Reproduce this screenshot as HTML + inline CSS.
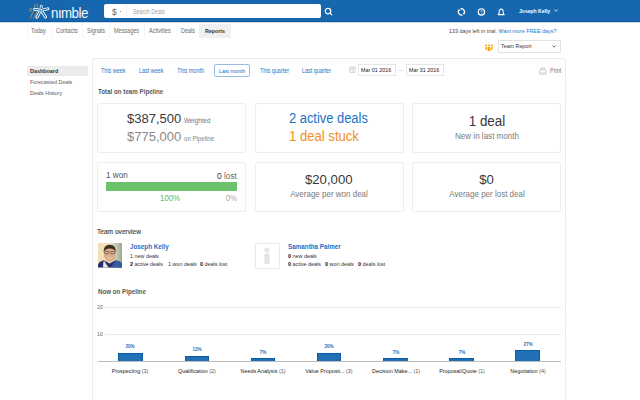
<!DOCTYPE html>
<html><head><meta charset="utf-8"><style>
html,body{margin:0;padding:0;}
body{width:640px;height:400px;overflow:hidden;position:relative;background:#fff;font-family:"Liberation Sans",sans-serif;}
.t{position:absolute;white-space:nowrap;}
</style></head><body>
<div style="position:absolute;left:0px;top:0px;width:640px;height:21px;background:#1767af;"></div>
<div style="position:absolute;left:0px;top:21px;width:640px;height:1px;background:#0d58a0;"></div>
<div style="position:absolute;left:0px;top:22px;width:640px;height:1px;background:#d3dbe6;"></div>
<svg style="position:absolute;left:28px;top:2px" width="22" height="18" viewBox="0 0 22 18">
<g fill="none" stroke="#d6a444" stroke-width="0.75" stroke-linecap="round">
<path d="M7.2 2.2 Q6 3.2 6.6 4.9"/>
<path d="M10 2.2 Q8.8 3.2 9.4 4.9"/>
<path d="M3.6 6.5 Q1.6 6.2 1.3 7.6 Q1.2 8.9 3.4 9.1"/>
<path d="M5.2 9.6 Q4.4 10.8 4.2 12 Q3.2 13.2 3.4 14.2 Q2.4 15 2.2 15.8"/>
<path d="M8.8 9.9 Q8 11 7.8 12.2 Q6.8 13.4 7 14.4 Q6 15.2 5.6 15.9"/>
</g>
<g stroke-linecap="round" fill="none">
<path d="M6.6 7.2 L12.6 8.3 M14 8.1 L19.8 6.8 M12.2 9.4 L8.9 15.2 M14 9.6 L17.6 15.1" stroke="#fff" stroke-width="2.9"/>
<path d="M6.6 7.2 L12.6 8.3 M14 8.1 L19.8 6.8 M12.2 9.4 L8.9 15.2 M14 9.6 L17.6 15.1" stroke="#1767af" stroke-width="1.1"/>
</g>
<path d="M12.3 5.9 V4.3 Q12.3 3.2 13.3 3.2 Q14.3 3.2 14.3 4.3 V5.9" fill="none" stroke="#fff" stroke-width="0.9"/>
</svg>
<div class="t" style="left:50.60px;top:5.95px;font-size:14.23px;line-height:14.23px;color:#f4f7fb;font-weight:normal;transform:scaleX(0.9346);transform-origin:0 0;letter-spacing:-0.55px;">n&#305;mble</div>
<div style="position:absolute;left:104px;top:4px;width:216.5px;height:14px;background:#fff;border-radius:2px;"></div>
<div class="t" style="left:111.80px;top:7.01px;font-size:9.49px;line-height:9.49px;color:#666;font-weight:normal;transform:scaleX(0.8850);transform-origin:0 0;">$</div>
<div style="position:absolute;left:120.2px;top:11.2px;width:1.2000000000000028px;height:1.0px;background:#888;"></div>
<div style="position:absolute;left:126px;top:4px;width:1px;height:14px;background:#f0f0f0;"></div>
<div class="t" style="left:132.80px;top:8.67px;font-size:6.89px;line-height:6.89px;color:#a0a0a0;font-weight:normal;transform:scaleX(0.7692);transform-origin:0 0;">Search Deals</div>
<svg style="position:absolute;left:324px;top:6.5px" width="10" height="9" viewBox="0 0 10 9">
<circle cx="4" cy="4.1" r="2.75" fill="none" stroke="#fff" stroke-width="1.15"/>
<path d="M6 6.1 L7.8 7.9" stroke="#fff" stroke-width="1.2" stroke-linecap="round"/></svg>
<svg style="position:absolute;left:457px;top:7.5px" width="9" height="8" viewBox="0 0 9 8">
<path d="M3.34 0.99 A3.1 3.1 0 0 1 6.77 5.89" fill="none" stroke="#fff" stroke-width="1.3"/>
<path d="M5.46 6.81 A3.1 3.1 0 0 1 2.03 1.91" fill="none" stroke="#fff" stroke-width="1.3"/>
<path d="M7.9 4.6 L6.9 6.6 L5.4 5.2 Z" fill="#fff"/><path d="M0.9 3.2 L1.9 1.2 L3.4 2.6 Z" fill="#fff"/></svg>
<svg style="position:absolute;left:476.5px;top:7.5px" width="9" height="8" viewBox="0 0 9 8">
<circle cx="4.4" cy="3.9" r="3.15" fill="none" stroke="#fff" stroke-width="1.2"/>
<path d="M3.5 2.9 q0.9-1.1 1.8 0 q0.3 0.7-0.8 1.3" fill="none" stroke="#fff" stroke-width="0.75"/>
<circle cx="4.5" cy="5.3" r="0.4" fill="#fff"/></svg>
<svg style="position:absolute;left:496.5px;top:7.5px" width="9" height="8" viewBox="0 0 9 8">
<path d="M1.2 6.6 Q2.3 5.8 2.3 3.6 Q2.3 0.9 4.2 0.9 Q6.1 0.9 6.1 3.6 Q6.1 5.8 7.2 6.6 Z" fill="none" stroke="#fff" stroke-width="1.05" stroke-linejoin="round"/>
</svg>
<div class="t" style="left:518.90px;top:9.08px;font-size:5.81px;line-height:5.81px;color:#fff;font-weight:bold;transform:scaleX(0.8696);transform-origin:0 0;">Joseph Kelly</div>
<svg style="position:absolute;left:553.5px;top:9.2px" width="5" height="3" viewBox="0 0 5 3">
<path d="M0.5 0.5 L2.2 2.3 L3.9 0.5" fill="none" stroke="#fff" stroke-width="0.8"/></svg>
<div style="position:absolute;left:27px;top:24px;width:1px;height:14px;background:#f5f5f5;"></div>
<div style="position:absolute;left:51px;top:24px;width:1px;height:14px;background:#f5f5f5;"></div>
<div style="position:absolute;left:82px;top:24px;width:1px;height:14px;background:#f5f5f5;"></div>
<div style="position:absolute;left:109px;top:24px;width:1px;height:14px;background:#f5f5f5;"></div>
<div style="position:absolute;left:144px;top:24px;width:1px;height:14px;background:#f5f5f5;"></div>
<div class="t" style="left:31.25px;top:27.84px;font-size:6.32px;line-height:6.32px;color:#6b6b6b;font-weight:normal;transform:scaleX(0.8696);transform-origin:0 0;">Today</div>
<div class="t" style="left:55.90px;top:27.84px;font-size:6.32px;line-height:6.32px;color:#6b6b6b;font-weight:normal;transform:scaleX(0.8696);transform-origin:0 0;">Contacts</div>
<div class="t" style="left:86.80px;top:27.84px;font-size:6.32px;line-height:6.32px;color:#6b6b6b;font-weight:normal;transform:scaleX(0.8696);transform-origin:0 0;">Signals</div>
<div class="t" style="left:114.00px;top:27.84px;font-size:6.32px;line-height:6.32px;color:#6b6b6b;font-weight:normal;transform:scaleX(0.8696);transform-origin:0 0;">Messages</div>
<div class="t" style="left:149.10px;top:27.84px;font-size:6.32px;line-height:6.32px;color:#6b6b6b;font-weight:normal;transform:scaleX(0.8696);transform-origin:0 0;">Activities</div>
<div class="t" style="left:181.00px;top:27.84px;font-size:6.32px;line-height:6.32px;color:#6b6b6b;font-weight:normal;transform:scaleX(0.8696);transform-origin:0 0;">Deals</div>
<div style="position:absolute;left:199px;top:24px;width:32px;height:14px;background:#f0f0f0;"></div>
<div class="t" style="left:204.75px;top:28.04px;font-size:6.09px;line-height:6.09px;color:#333;font-weight:bold;transform:scaleX(0.8696);transform-origin:0 0;">Reports</div>
<div class="t" style="left:449.10px;top:27.64px;font-size:6.21px;line-height:6.21px;color:#444;font-weight:normal;transform:scaleX(0.8696);transform-origin:0 0;">133 days left in trial. <span style="color:#1c76ca">Want more FREE days?</span></div>
<svg style="position:absolute;left:482px;top:41px" width="14" height="12" viewBox="0 0 14 12">
<g fill="#f8a500"><ellipse cx="4" cy="4.4" rx="1.05" ry="0.85"/><ellipse cx="7" cy="4.4" rx="1.05" ry="0.85"/><ellipse cx="10" cy="4.4" rx="1.05" ry="0.85"/>
<rect x="3.3" y="6" width="1.4" height="3.1" rx="0.6"/><rect x="5.5" y="6.1" width="3" height="3.9" rx="0.4"/><rect x="9.3" y="6" width="1.4" height="3.1" rx="0.6"/></g></svg>
<div style="position:absolute;left:498px;top:40px;width:63px;height:13px;box-sizing:border-box;border:1px solid #e3e3e3;background:#fff;"></div>
<div class="t" style="left:501.10px;top:42.79px;font-size:6.15px;line-height:6.15px;color:#333;font-weight:normal;transform:scaleX(0.8696);transform-origin:0 0;">Team Report</div>
<svg style="position:absolute;left:552px;top:45px" width="5" height="3" viewBox="0 0 5 3">
<path d="M0.5 0.5 L2 2.2 L3.5 0.5" fill="none" stroke="#444" stroke-width="0.8"/></svg>
<div style="position:absolute;left:26.5px;top:65.7px;width:61.7px;height:10.200000000000003px;background:#ececec;"></div>
<div class="t" style="left:29.75px;top:68.24px;font-size:6.21px;line-height:6.21px;color:#333;font-weight:bold;transform:scaleX(0.8696);transform-origin:0 0;">Dashboard</div>
<div class="t" style="left:29.75px;top:78.94px;font-size:6.21px;line-height:6.21px;color:#5a5a5a;font-weight:normal;transform:scaleX(0.8696);transform-origin:0 0;">Forecasted Deals</div>
<div class="t" style="left:29.75px;top:89.64px;font-size:6.21px;line-height:6.21px;color:#5a5a5a;font-weight:normal;transform:scaleX(0.8696);transform-origin:0 0;">Deals History</div>
<div style="position:absolute;left:92px;top:58px;width:474px;height:352px;box-sizing:border-box;border:1px solid #ececec;border-radius:3px;"></div>
<div class="t" style="left:100.75px;top:68.19px;font-size:6.27px;line-height:6.27px;color:#1c76ca;font-weight:normal;transform:scaleX(0.8696);transform-origin:0 0;">This week</div>
<div class="t" style="left:138.75px;top:68.19px;font-size:6.27px;line-height:6.27px;color:#1c76ca;font-weight:normal;transform:scaleX(0.8696);transform-origin:0 0;">Last week</div>
<div class="t" style="left:177.00px;top:68.19px;font-size:6.27px;line-height:6.27px;color:#1c76ca;font-weight:normal;transform:scaleX(0.8696);transform-origin:0 0;">This month</div>
<div class="t" style="left:259.50px;top:68.19px;font-size:6.27px;line-height:6.27px;color:#1c76ca;font-weight:normal;transform:scaleX(0.8696);transform-origin:0 0;">This quarter</div>
<div class="t" style="left:302.00px;top:68.19px;font-size:6.27px;line-height:6.27px;color:#1c76ca;font-weight:normal;transform:scaleX(0.8696);transform-origin:0 0;">Last quarter</div>
<div style="position:absolute;left:214.25px;top:64.25px;width:35.5px;height:12.5px;box-sizing:border-box;border:1px solid #94bde8;border-radius:2px;"></div>
<div class="t" style="left:218.75px;top:68.34px;font-size:6.09px;line-height:6.09px;color:#1b6cc0;font-weight:normal;transform:scaleX(0.8696);transform-origin:0 0;">Last month</div>
<svg style="position:absolute;left:348.5px;top:66px" width="7" height="7" viewBox="0 0 7 7">
<rect x="0.6" y="1.1" width="5.6" height="5.3" fill="#f4f4f4" stroke="#d4d4d4" stroke-width="0.8"/>
<path d="M0.6 2.8 H6.2 M3.4 2.8 V6.4" stroke="#d4d4d4" stroke-width="0.7"/><path d="M2 0.2 V1.6 M4.8 0.2 V1.6" stroke="#d0d0d0" stroke-width="0.8"/></svg>
<div style="position:absolute;left:358px;top:64px;width:38px;height:12px;box-sizing:border-box;border:1px solid #e6e6e6;"></div>
<div class="t" style="left:360.60px;top:67.04px;font-size:6.21px;line-height:6.21px;color:#222;font-weight:normal;transform:scaleX(0.8696);transform-origin:0 0;">Mar 01 2016</div>
<div style="position:absolute;left:399px;top:70px;width:4px;height:1px;background:#e2e2e2;"></div>
<div style="position:absolute;left:406px;top:64px;width:38px;height:12px;box-sizing:border-box;border:1px solid #e6e6e6;"></div>
<div class="t" style="left:408.90px;top:67.04px;font-size:6.21px;line-height:6.21px;color:#222;font-weight:normal;transform:scaleX(0.8696);transform-origin:0 0;">Mar 31 2016</div>
<svg style="position:absolute;left:539px;top:66.5px" width="8" height="8" viewBox="0 0 8 8">
<path d="M1.9 2.2 V0.9 H5.9 V2.2" fill="none" stroke="#bdbdbd" stroke-width="0.75"/>
<path d="M0.7 7 V4.3 Q0.7 2.6 2.1 2.6 H5.7 Q7.1 2.6 7.1 4.3 V7 Z" fill="none" stroke="#b8b8b8" stroke-width="0.75"/>
<path d="M1.8 5.3 H6" stroke="#d0d0d0" stroke-width="0.6"/></svg>
<div class="t" style="left:549.75px;top:67.89px;font-size:6.27px;line-height:6.27px;color:#777;font-weight:normal;transform:scaleX(0.8696);transform-origin:0 0;">Print</div>
<div class="t" style="left:97.50px;top:88.86px;font-size:7.13px;line-height:7.13px;color:#5a5a5a;font-weight:bold;transform:scaleX(0.8696);transform-origin:0 0;">Total on team Pipeline</div>
<div style="position:absolute;left:97px;top:103px;width:149px;height:50px;box-sizing:border-box;border:1px solid #eeeeee;border-radius:2px;background:#fff;"></div>
<div style="position:absolute;left:97px;top:162px;width:149px;height:50px;box-sizing:border-box;border:1px solid #eeeeee;border-radius:2px;background:#fff;"></div>
<div style="position:absolute;left:255px;top:103px;width:149px;height:50px;box-sizing:border-box;border:1px solid #eeeeee;border-radius:2px;background:#fff;"></div>
<div style="position:absolute;left:255px;top:162px;width:149px;height:50px;box-sizing:border-box;border:1px solid #eeeeee;border-radius:2px;background:#fff;"></div>
<div style="position:absolute;left:412px;top:103px;width:149px;height:50px;box-sizing:border-box;border:1px solid #eeeeee;border-radius:2px;background:#fff;"></div>
<div style="position:absolute;left:412px;top:162px;width:149px;height:50px;box-sizing:border-box;border:1px solid #eeeeee;border-radius:2px;background:#fff;"></div>
<div class="t" style="left:127.20px;top:111.67px;font-size:13.26px;line-height:13.26px;color:#3a3a3a;font-weight:normal;transform:scaleX(0.9804);transform-origin:0 0;">$387,500</div>
<div class="t" style="left:183.90px;top:117.37px;font-size:7.24px;line-height:7.24px;color:#777;font-weight:normal;transform:scaleX(0.8696);transform-origin:0 0;">Weighted</div>
<div class="t" style="left:127.20px;top:129.97px;font-size:13.26px;line-height:13.26px;color:#8a8a8a;font-weight:normal;transform:scaleX(0.9804);transform-origin:0 0;">$775,000</div>
<div class="t" style="left:184.40px;top:135.26px;font-size:7.01px;line-height:7.01px;color:#888;font-weight:normal;transform:scaleX(0.8696);transform-origin:0 0;">on Pipeline</div>
<div class="t" style="left:289.30px;top:112.11px;font-size:13.80px;line-height:13.80px;color:#1b72c6;font-weight:normal;transform:scaleX(0.9346);transform-origin:0 0;">2 active deals</div>
<div class="t" style="left:289.30px;top:129.43px;font-size:14.02px;line-height:14.02px;color:#ef8e1f;font-weight:normal;transform:scaleX(0.9346);transform-origin:0 0;">1 deal stuck</div>
<div class="t" style="left:186.50px;width:600px;text-align:center;top:114.70px;font-size:13.94px;line-height:13.94px;color:#383838;font-weight:normal;transform:scaleX(0.9615);transform-origin:50% 0;">1 deal</div>
<div class="t" style="left:186.80px;width:600px;text-align:center;top:132.16px;font-size:9.26px;line-height:9.26px;color:#7a7a7a;font-weight:normal;transform:scaleX(0.8696);transform-origin:50% 0;">New in last month</div>
<div class="t" style="left:106.00px;top:171.66px;font-size:8.20px;line-height:8.20px;color:#555;font-weight:normal;">1 won</div>
<div class="t" style="left:-363.10px;width:600px;text-align:right;top:171.57px;font-size:8.30px;line-height:8.30px;color:#666;font-weight:normal;"><span style="color:#333">0</span> lost</div>
<div style="position:absolute;left:106.3px;top:182.4px;width:130.7px;height:9.0px;background:#6cc16b;"></div>
<div class="t" style="left:-420.30px;width:600px;text-align:right;top:194.07px;font-size:9.36px;line-height:9.36px;color:#5cb85c;font-weight:normal;transform:scaleX(0.8333);transform-origin:100% 0;">100%</div>
<div class="t" style="left:-363.10px;width:600px;text-align:right;top:194.07px;font-size:9.36px;line-height:9.36px;color:#aaa;font-weight:normal;transform:scaleX(0.8333);transform-origin:100% 0;">0%</div>
<div class="t" style="left:28.80px;width:600px;text-align:center;top:173.02px;font-size:13.20px;line-height:13.20px;color:#383838;font-weight:normal;">$20,000</div>
<div class="t" style="left:29.20px;width:600px;text-align:center;top:189.61px;font-size:8.96px;line-height:8.96px;color:#7a7a7a;font-weight:normal;transform:scaleX(0.8929);transform-origin:50% 0;">Average per won deal</div>
<div class="t" style="left:186.50px;width:600px;text-align:center;top:173.42px;font-size:13.20px;line-height:13.20px;color:#383838;font-weight:normal;">$0</div>
<div class="t" style="left:186.70px;width:600px;text-align:center;top:189.61px;font-size:8.96px;line-height:8.96px;color:#7a7a7a;font-weight:normal;transform:scaleX(0.8929);transform-origin:50% 0;">Average per lost deal</div>
<div class="t" style="left:97.00px;top:227.57px;font-size:7.59px;line-height:7.59px;color:#444;font-weight:normal;transform:scaleX(0.8696);transform-origin:0 0;-webkit-text-stroke:0.15px #444;">Team overview</div>
<svg style="position:absolute;left:97.5px;top:243.4px" width="24.5" height="24.6" viewBox="0 0 24.5 24.6">
<defs><linearGradient id="bg" x1="0" y1="0" x2="1" y2="0"><stop offset="0" stop-color="#f5dfae"/><stop offset="0.45" stop-color="#efe2c0"/><stop offset="0.7" stop-color="#cdd2b8"/><stop offset="1" stop-color="#9aa38c"/></linearGradient></defs>
<rect width="24.5" height="24.6" rx="0.8" fill="url(#bg)"/>
<ellipse cx="11.8" cy="11.6" rx="5.9" ry="7.4" fill="#dcae8a"/>
<path d="M5.6 10 Q5 2 11.6 1.8 Q18.4 1.8 17.8 10 Q17.2 5.8 11.8 5.6 Q6.4 5.8 5.6 10Z" fill="#3f2d22"/>
<rect x="6.6" y="8.3" width="4.2" height="2.4" rx="0.8" fill="none" stroke="#4a3a32" stroke-width="0.6"/>
<rect x="12.6" y="8.3" width="4.2" height="2.4" rx="0.8" fill="none" stroke="#4a3a32" stroke-width="0.6"/>
<path d="M8.8 14.2 Q11.8 16.6 14.8 14.2 Q11.8 15.2 8.8 14.2Z" fill="#f6efe8"/>
<path d="M0 24.6 V21.8 Q1 18.4 5.8 17.2 L11.6 20.4 L17.8 17.2 Q23.2 18.4 24.5 21 V24.6Z" fill="#262e68"/>
<path d="M12.5 24.6 L17.8 17.4 Q23.2 18.6 24.5 21.2 V24.6Z" fill="#3a5aa0"/>
<path d="M5.8 17.6 L10.5 24.6 H5.2 Q4.8 21 5.8 17.6Z" fill="#ebe8e4"/>
</svg>
<div class="t" style="left:129.80px;top:243.07px;font-size:7.24px;line-height:7.24px;color:#1f70c1;font-weight:bold;transform:scaleX(0.8696);transform-origin:0 0;">Joseph Kelly</div>
<div class="t" style="left:129.80px;top:252.74px;font-size:6.21px;line-height:6.21px;color:#333;font-weight:normal;transform:scaleX(0.8696);transform-origin:0 0;">1 new deals</div>
<div class="t" style="left:129.80px;top:261.04px;font-size:6.21px;line-height:6.21px;color:#333;font-weight:normal;transform:scaleX(0.8696);transform-origin:0 0;"><b style="color:#111">2</b> active deals</div>
<div class="t" style="left:167.80px;top:261.04px;font-size:6.21px;line-height:6.21px;color:#333;font-weight:normal;transform:scaleX(0.8696);transform-origin:0 0;">1 won deals</div>
<div class="t" style="left:200.40px;top:261.04px;font-size:6.21px;line-height:6.21px;color:#333;font-weight:normal;transform:scaleX(0.8696);transform-origin:0 0;"><b style="color:#111">0</b> deals lost</div>
<div style="position:absolute;left:254.7px;top:243px;width:25.30000000000001px;height:25.80000000000001px;box-sizing:border-box;border:1.3px solid #e8e8e8;border-radius:1.5px;background:#fff;"></div>
<svg style="position:absolute;left:262px;top:246px" width="10" height="20" viewBox="0 0 10 20">
<circle cx="5" cy="4" r="2.6" fill="#e4e4e4"/><rect x="2.3" y="7.6" width="5.4" height="10.3" rx="1.5" fill="#e4e4e4"/></svg>
<div class="t" style="left:287.60px;top:243.07px;font-size:7.24px;line-height:7.24px;color:#1f70c1;font-weight:bold;transform:scaleX(0.8696);transform-origin:0 0;">Samantha Palmer</div>
<div class="t" style="left:287.60px;top:252.74px;font-size:6.21px;line-height:6.21px;color:#333;font-weight:normal;transform:scaleX(0.8696);transform-origin:0 0;"><b style="color:#111">0</b> new deals</div>
<div class="t" style="left:287.60px;top:261.04px;font-size:6.21px;line-height:6.21px;color:#333;font-weight:normal;transform:scaleX(0.8696);transform-origin:0 0;"><b style="color:#111">0</b> active deals</div>
<div class="t" style="left:325.00px;top:261.04px;font-size:6.21px;line-height:6.21px;color:#333;font-weight:normal;transform:scaleX(0.8696);transform-origin:0 0;"><b style="color:#111">0</b> won deals</div>
<div class="t" style="left:357.90px;top:261.04px;font-size:6.21px;line-height:6.21px;color:#333;font-weight:normal;transform:scaleX(0.8696);transform-origin:0 0;"><b style="color:#111">0</b> deals lost</div>
<div class="t" style="left:97.50px;top:288.86px;font-size:7.13px;line-height:7.13px;color:#5a5a5a;font-weight:bold;transform:scaleX(0.8696);transform-origin:0 0;">Now on Pipeline</div>
<div class="t" style="left:97.10px;top:304.04px;font-size:5.98px;line-height:5.98px;color:#666;font-weight:normal;transform:scaleX(0.8696);transform-origin:0 0;">20</div>
<div style="position:absolute;left:105px;top:307px;width:456px;height:1px;background:#ececec;"></div>
<div class="t" style="left:97.10px;top:330.64px;font-size:5.98px;line-height:5.98px;color:#666;font-weight:normal;transform:scaleX(0.8696);transform-origin:0 0;">10</div>
<div style="position:absolute;left:105px;top:334px;width:456px;height:1px;background:#ececec;"></div>
<div style="position:absolute;left:97.5px;top:361px;width:463.5px;height:1px;background:#bdbdbd;"></div>
<div style="position:absolute;left:118.14999999999999px;top:352.9px;width:24.60000000000001px;height:8.100000000000023px;box-sizing:border-box;border:1px solid #0d5ba6;border-bottom:none;background:#2170b4;"></div>
<div class="t" style="left:-169.55px;width:600px;text-align:center;top:344.42px;font-size:5.29px;line-height:5.29px;color:#1f6fc0;font-weight:bold;transform:scaleX(0.8696);transform-origin:50% 0;">20%</div>
<div class="t" style="left:-169.55px;width:600px;text-align:center;top:368.34px;font-size:6.21px;line-height:6.21px;color:#1a1a1a;font-weight:normal;transform:scaleX(0.8696);transform-origin:50% 0;">Prospecting <span style="color:#555;position:relative;top:-0.7px">(3)</span></div>
<div style="position:absolute;left:184.5px;top:355.6px;width:24.600000000000023px;height:5.399999999999977px;box-sizing:border-box;border:1px solid #0d5ba6;border-bottom:none;background:#2170b4;"></div>
<div class="t" style="left:-103.20px;width:600px;text-align:center;top:347.12px;font-size:5.29px;line-height:5.29px;color:#1f6fc0;font-weight:bold;transform:scaleX(0.8696);transform-origin:50% 0;">13%</div>
<div class="t" style="left:-103.20px;width:600px;text-align:center;top:368.34px;font-size:6.21px;line-height:6.21px;color:#1a1a1a;font-weight:normal;transform:scaleX(0.8696);transform-origin:50% 0;">Qualification <span style="color:#555;position:relative;top:-0.7px">(2)</span></div>
<div style="position:absolute;left:250.7px;top:358.3px;width:24.600000000000023px;height:2.6999999999999886px;box-sizing:border-box;border:1px solid #0d5ba6;border-bottom:none;background:#2170b4;"></div>
<div class="t" style="left:-37.00px;width:600px;text-align:center;top:349.82px;font-size:5.29px;line-height:5.29px;color:#1f6fc0;font-weight:bold;transform:scaleX(0.8696);transform-origin:50% 0;">7%</div>
<div class="t" style="left:-37.00px;width:600px;text-align:center;top:368.34px;font-size:6.21px;line-height:6.21px;color:#1a1a1a;font-weight:normal;transform:scaleX(0.8696);transform-origin:50% 0;">Needs Analysis <span style="color:#555;position:relative;top:-0.7px">(1)</span></div>
<div style="position:absolute;left:316.9px;top:352.9px;width:24.600000000000023px;height:8.100000000000023px;box-sizing:border-box;border:1px solid #0d5ba6;border-bottom:none;background:#2170b4;"></div>
<div class="t" style="left:29.20px;width:600px;text-align:center;top:344.42px;font-size:5.29px;line-height:5.29px;color:#1f6fc0;font-weight:bold;transform:scaleX(0.8696);transform-origin:50% 0;">20%</div>
<div class="t" style="left:29.20px;width:600px;text-align:center;top:368.34px;font-size:6.21px;line-height:6.21px;color:#1a1a1a;font-weight:normal;transform:scaleX(0.8696);transform-origin:50% 0;">Value Proposit... <span style="color:#555;position:relative;top:-0.7px">(3)</span></div>
<div style="position:absolute;left:383.2px;top:358.3px;width:24.600000000000023px;height:2.6999999999999886px;box-sizing:border-box;border:1px solid #0d5ba6;border-bottom:none;background:#2170b4;"></div>
<div class="t" style="left:95.50px;width:600px;text-align:center;top:349.82px;font-size:5.29px;line-height:5.29px;color:#1f6fc0;font-weight:bold;transform:scaleX(0.8696);transform-origin:50% 0;">7%</div>
<div class="t" style="left:95.50px;width:600px;text-align:center;top:368.34px;font-size:6.21px;line-height:6.21px;color:#1a1a1a;font-weight:normal;transform:scaleX(0.8696);transform-origin:50% 0;">Decision Make... <span style="color:#555;position:relative;top:-0.7px">(1)</span></div>
<div style="position:absolute;left:449.2px;top:358.3px;width:24.600000000000023px;height:2.6999999999999886px;box-sizing:border-box;border:1px solid #0d5ba6;border-bottom:none;background:#2170b4;"></div>
<div class="t" style="left:161.50px;width:600px;text-align:center;top:349.82px;font-size:5.29px;line-height:5.29px;color:#1f6fc0;font-weight:bold;transform:scaleX(0.8696);transform-origin:50% 0;">7%</div>
<div class="t" style="left:161.50px;width:600px;text-align:center;top:368.34px;font-size:6.21px;line-height:6.21px;color:#1a1a1a;font-weight:normal;transform:scaleX(0.8696);transform-origin:50% 0;">Proposal/Quote <span style="color:#555;position:relative;top:-0.7px">(1)</span></div>
<div style="position:absolute;left:515.35px;top:350.2px;width:24.59999999999991px;height:10.800000000000011px;box-sizing:border-box;border:1px solid #0d5ba6;border-bottom:none;background:#2170b4;"></div>
<div class="t" style="left:227.65px;width:600px;text-align:center;top:341.72px;font-size:5.29px;line-height:5.29px;color:#1f6fc0;font-weight:bold;transform:scaleX(0.8696);transform-origin:50% 0;">27%</div>
<div class="t" style="left:227.65px;width:600px;text-align:center;top:368.34px;font-size:6.21px;line-height:6.21px;color:#1a1a1a;font-weight:normal;transform:scaleX(0.8696);transform-origin:50% 0;">Negotiation <span style="color:#555;position:relative;top:-0.7px">(4)</span></div>
</body></html>
